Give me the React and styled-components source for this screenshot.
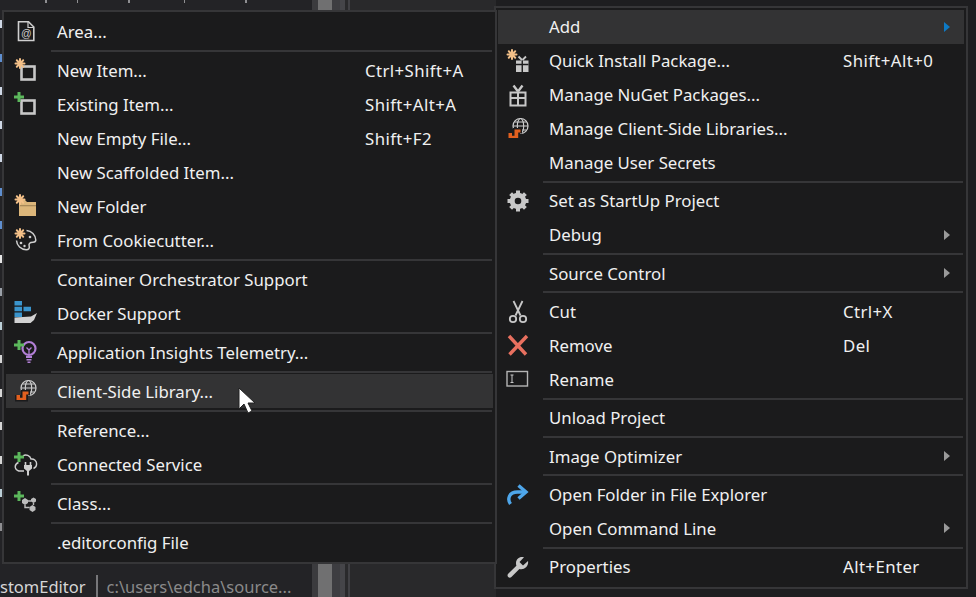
import React from "react";
import styled, { createGlobalStyle } from "styled-components";

const Global = createGlobalStyle`
  html, body { margin: 0; padding: 0; background: #272729; }
  * { box-sizing: border-box; }
`;

const Screen = styled.div`
  position: relative;
  width: 976px;
  height: 597px;
  overflow: hidden;
  background: #272729;
  font-family: "Noto Sans", "Open Sans", sans-serif;
`;

const Backdrop = styled.div`
  height: 100%;
  display: grid;
  grid-template-columns: 312px 38px 146px 1fr;
`;
const EditorPane = styled.div`
  position: relative;
  display: flex;
  flex-direction: column;
  justify-content: space-between;
  background: #232326;
`;
const TopTicks = styled.div`
  height: 3px;
  display: flex;
  padding-left: 45px;
  gap: 30px;
`;
const Tick = styled.i`
  display: block;
  width: 1.5px;
  height: 3px;
  margin-right: ${(p) => p.$gap}px;
  background: #8f8f92;
`;
const CodeEdge = styled.div`
  position: absolute;
  left: 0;
  top: 20px;
  display: flex;
  flex-direction: column;
  gap: 25.5px;
`;
const CodeBit = styled.i`
  display: block;
  width: 2px;
  height: 8px;
  background: ${(p) => p.$c};
`;
const StatusRow = styled.div`
  height: 22px;
  display: flex;
  align-items: center;
  gap: 10px;
  font-size: 16.5px;
  color: #d6d6d6;
  white-space: nowrap;
`;
const StatusPath = styled.span`
  color: #8a8a8a;
  border-left: 2px solid #77777a;
  padding-left: 9px;
`;
const ScrollBar = styled.div`
  background: linear-gradient(90deg, #3b3b3e 0 6px, #707071 6px 20px, #3d3d41 20px 28px, #454549 28px 33px, #2a2a2c 33px 36px, #414145 36px);
`;
const MiddlePane = styled.div`
  background: #29292b;
`;
const RightPane = styled.div`
  background: #1e1e20;
`;

const Menu = styled.div`
  position: absolute;
  left: ${(p) => p.$left}px;
  top: ${(p) => p.$top}px;
  width: ${(p) => p.$width}px;
  z-index: ${(p) => p.$z};
  padding: ${(p) => p.$padTop}px 2px 3px 2px;
  background: #1b1b1c;
  border: 2px solid #363638;
  color: #f0f0f0;
  font-size: 16.8px;
`;
const Row = styled.div`
  height: ${(p) => p.$h}px;
  display: grid;
  grid-template-columns: 51px ${(p) => p.$sc}px 1fr 20px;
  align-items: center;
  white-space: nowrap;
  background: ${(p) => (p.$active ? "#333334" : "transparent")};
`;
const IconCell = styled.span`
  display: flex;
  justify-content: center;
  align-items: center;
  padding-right: 11px;
  height: 26px;
`;
const Label = styled.span``;
const Shortcut = styled.span`
  letter-spacing: 0.42px;
`;
const Arrow = styled.span`
  width: 0;
  height: 0;
  border-top: 5px solid transparent;
  border-bottom: 5px solid transparent;
  border-left: 6px solid ${(p) => (p.$active ? "#0e7ac4" : "#9a9a9a")};
`;
const Sep = styled.div`
  height: ${(p) => p.$h}px;
  margin-left: 45px;
  margin-right: 1px;
  display: flex;
  align-items: center;
  &::before {
    content: "";
    display: block;
    width: 100%;
    height: 2px;
    background: #363638;
  }
`;
const Cursor = styled.svg`
  position: absolute;
  left: 238px;
  top: 387px;
  z-index: 5;
`;

const G = "#cfcfcf";
const Star = () => (
  <g stroke="#f3c088" strokeWidth="2" strokeLinecap="round">
    <path d="M6 1v9M1.5 5.5h9M2.8 2.300l6.400 6.400M9.200 2.300L2.800 8.700" />
  </g>
);
const Plus = () => <path d="M3.500 0h3v3.500H10v3H6.500V10h-3V6.500H0v-3h3.500z" fill="#5cb85c" />;
const Svg = ({ children }) => (
  <svg width="24" height="24" viewBox="0 0 24 24" fill="none">{children}</svg>
);

const icons = {
  area: (
    <Svg>
      <path d="M4.500 2.800h10L19.800 8v13.500H4.500z" stroke={G} strokeWidth="1.600" />
      <path d="M14 3v5.500h5.500" stroke={G} strokeWidth="1.200" />
      <text x="7" y="18" fontSize="10.500" fill={G} fontFamily="Liberation Sans, sans-serif">@</text>
    </Svg>
  ),
  newItem: (
    <Svg>
      <rect x="7.500" y="8.500" width="13" height="13" stroke="#c8c8c8" strokeWidth="2.600" />
      <Star />
    </Svg>
  ),
  existing: (
    <Svg>
      <rect x="7.500" y="8.500" width="13" height="13" stroke="#c8c8c8" strokeWidth="2.600" />
      <Plus />
    </Svg>
  ),
  folder: (
    <Svg>
      <path d="M5 6h6l2 2h9v14H5z" fill="#dcb67a" />
      <rect x="6" y="11" width="16" height="1.300" fill="#a98a5a" />
      <Star />
    </Svg>
  ),
  cookie: (
    <Svg>
      <path d="M12.500 2.600A9.800 9.800 0 0 1 21.800 12c0 1.400-1 2.200-2.800 2.200-3.500 0-4.500 1.800-3.800 4 .5 2-.4 3.500-3 3.500A9.800 9.800 0 0 1 2.500 12.500" stroke={G} strokeWidth="1.500" />
      <circle cx="16" cy="9" r="1.300" fill={G} />
      <circle cx="7" cy="15" r="1.300" fill={G} />
      <circle cx="10.500" cy="18" r="1.200" fill={G} />
      <Star />
    </Svg>
  ),
  docker: (
    <Svg>
      <path d="M.5 0h7.500v4.500H.5zM.5 5.800h7.500v4.500H.5zM9.500 5.800H17v4.500H9.500zM.5 11.500h7.500V16H.5z" fill="#3a94cc" />
      <path d="M9 16l8-.5 6-3.500-3 7-3.500 3H.5v-5.500z" fill="#d2d2d2" />
    </Svg>
  ),
  insights: (
    <Svg>
      <circle cx="15" cy="8.500" r="6.500" stroke="#b27fd6" strokeWidth="2.200" />
      <path d="M12.500 7.500l2.500 2.500 2.500-2.500M15 10v5" stroke="#b27fd6" strokeWidth="1.300" />
      <path d="M12 16h6v2h-6zM12.500 19h5v1.500h-5zM13.500 21.500h3V23h-3z" fill="#b27fd6" />
      <Plus />
    </Svg>
  ),
  lib: (
    <Svg>
      <circle cx="14.500" cy="9" r="7.500" stroke={G} strokeWidth="1.200" />
      <ellipse cx="14.500" cy="9" rx="3.200" ry="7.500" stroke={G} strokeWidth="1.100" />
      <path d="M7 9h15M8.500 5h12M8.500 13h12" stroke={G} strokeWidth="1.100" />
      <path d="M7 11h9v5.500h-2v6H1v-6.500h6z" fill="#1b1b1c" />
      <path d="M8.500 12.500h6v3h-2.300v5.500H2.500v-5H6v2.800h2.500z" fill="#e2601f" />
    </Svg>
  ),
  connected: (
    <Svg>
      <path d="M9 3.800c3-1.800 7-.3 8 3.200 3.200-.3 5.800 1.800 5.600 5 0 2.300-1.300 3.800-3.100 4.500" stroke={G} strokeWidth="1.400" />
      <path d="M4.500 10.500C2 11.500 1 13.500 1.300 15.500c.3 1.800 1.500 3 3.500 3.500H10" stroke={G} strokeWidth="1.400" />
      <path d="M11.500 10v3M16.500 10v3" stroke={G} strokeWidth="1.600" />
      <path d="M10 13h8v3.500l-3 2.500v4.500h-2V19l-3-2.500z" fill={G} />
      <Plus />
    </Svg>
  ),
  classIcon: (
    <Svg>
      <path d="M8 9l3-2 3 2v3l-3 2-3-2zM17 8l2.500-1.500L22 8v2.500L19.500 12 17 10.500zM15.500 16l3-2 3 2v3l-3 2-3-2z" fill="#bdbdbd" />
      <path d="M14 10h3M11 14v2.500h4.500M19.500 12v2" stroke="#bdbdbd" strokeWidth="1.400" />
      <Plus />
    </Svg>
  ),
  quick: (
    <Svg>
      <path d="M10 11.500h12.500V23H10z" fill="#c8c8c8" />
      <path d="M10 15.500h12.500M16.250 11.500V23" stroke="#1b1b1c" strokeWidth="1.400" />
      <path d="M16 11l-3.500-3.500M16.500 11L20 7.500" stroke="#c8c8c8" strokeWidth="1.800" />
      <Star />
    </Svg>
  ),
  nuget: (
    <Svg>
      <path d="M4.500 9.500h15v13h-15z" stroke="#c8c8c8" strokeWidth="2" />
      <path d="M4.500 15h15M12 9.500v13" stroke="#c8c8c8" strokeWidth="2" />
      <path d="M12 8.500L7.500 2.500M12 8.500l4.500-6" stroke="#c8c8c8" strokeWidth="2.400" />
    </Svg>
  ),
  gear: (
    <Svg>
      <circle cx="12" cy="12" r="5.800" stroke="#c8c8c8" strokeWidth="5" />
      <path d="M12 1.500v4M12 18.500v4M1.500 12h4M18.500 12h4M4.600 4.600l2.800 2.800M16.600 16.600l2.800 2.800M19.400 4.600l-2.800 2.800M7.400 16.600l-2.800 2.800" stroke="#c8c8c8" strokeWidth="4" />
    </Svg>
  ),
  cut: (
    <Svg>
      <path d="M7.500 1l7 14.500M16.500 1l-7 14.500" stroke="#c8c8c8" strokeWidth="1.800" />
      <circle cx="7" cy="19" r="3.200" stroke="#c8c8c8" strokeWidth="1.800" />
      <circle cx="17" cy="19" r="3.200" stroke="#c8c8c8" strokeWidth="1.800" />
    </Svg>
  ),
  remove: (
    <Svg>
      <path d="M3 3l17 18.500M21 3L3.500 21.500" stroke="#e8705f" strokeWidth="3.400" />
    </Svg>
  ),
  rename: (
    <Svg>
      <rect x="1" y="4.500" width="20.500" height="14.500" stroke="#b4b4b4" strokeWidth="1.400" />
      <path d="M4.500 8h3M4.500 15.500h3M6 8v7.500" stroke="#c8c8c8" strokeWidth="1" />
    </Svg>
  ),
  open: (
    <Svg>
      <path d="M4.500 21c-3.500-5-1.500-12 7-12h8" stroke="#4ea6ea" strokeWidth="3.400" />
      <path d="M12.500 2.500L20 9l-7.500 6.500" stroke="#4ea6ea" strokeWidth="3.400" />
    </Svg>
  ),
  wrench: (
    <Svg>
      <path
        d="M22 6l-5 4.500-3.500-3.500L18 2.300C14 1 9.800 3.800 10 8.500c0 1 .2 1.600.4 2.300L2.200 18.800c-1 1.200-.8 2.400 0 3.200.9.900 2.200.9 3.200 0l8-8c4.500 1.500 9.600-2.600 8.600-8z"
        fill="#c8c8c8"
      />
    </Svg>
  ),
};

const leftItems = [
  { l: "Area...", i: "area" }, 0,
  { l: "New Item...", i: "newItem", s: "Ctrl+Shift+A" },
  { l: "Existing Item...", i: "existing", s: "Shift+Alt+A" },
  { l: "New Empty File...", s: "Shift+F2" },
  { l: "New Scaffolded Item..." },
  { l: "New Folder", i: "folder" },
  { l: "From Cookiecutter...", i: "cookie" }, 0,
  { l: "Container Orchestrator Support" },
  { l: "Docker Support", i: "docker" }, 0,
  { l: "Application Insights Telemetry...", i: "insights" }, 0,
  { l: "Client-Side Library...", i: "lib", active: true }, 0,
  { l: "Reference..." },
  { l: "Connected Service", i: "connected" }, 0,
  { l: "Class...", i: "classIcon" }, 0,
  { l: ".editorconfig File" },
];

const rightItems = [
  { l: "Add", active: true, sub: true },
  { l: "Quick Install Package...", i: "quick", s: "Shift+Alt+0" },
  { l: "Manage NuGet Packages...", i: "nuget" },
  { l: "Manage Client-Side Libraries...", i: "lib" },
  { l: "Manage User Secrets" }, 0,
  { l: "Set as StartUp Project", i: "gear" },
  { l: "Debug", sub: true }, 0,
  { l: "Source Control", sub: true }, 0,
  { l: "Cut", i: "cut", s: "Ctrl+X" },
  { l: "Remove", i: "remove", s: "Del" },
  { l: "Rename", i: "rename" }, 0,
  { l: "Unload Project" }, 0,
  { l: "Image Optimizer", sub: true }, 0,
  { l: "Open Folder in File Explorer", i: "open" },
  { l: "Open Command Line", sub: true }, 0,
  { l: "Properties", i: "wrench", s: "Alt+Enter" },
];

const MenuList = ({ items, sc, rowH, sepH }) =>
  items.map((it, n) =>
    it === 0 ? (
      <Sep key={n} $h={sepH} />
    ) : (
      <Row key={n} $h={rowH} $sc={sc} $active={it.active}>
        <IconCell>{it.i ? icons[it.i] : null}</IconCell>
        <Label>{it.l}</Label>
        <Shortcut>{it.s}</Shortcut>
        {it.sub ? <Arrow $active={it.active} /> : <span />}
      </Row>
    )
  );

const codeBits = ["#cfd8e6", "#5f8fd0", "#cfd8e6", "#cfd8e6", "#cfd8e6", "#5f8fd0", "#5f8fd0", "#e6e6e6", "#9aa0a8", "#bcd0d8", "#d6d6d6", "#d6d6d6", "#d6d6d6", "#d6d6d6", "#bcd0d8", "#8f8f92"];
const tickGaps = [0, 20, 24, 30, 0];

export default function App() {
  return (
    <Screen>
      <Global />
      <Backdrop>
        <EditorPane>
          <TopTicks>
            {tickGaps.map((g, n) => (
              <Tick key={n} $gap={g} />
            ))}
          </TopTicks>
          <CodeEdge>
            {codeBits.map((c, n) => (
              <CodeBit key={n} $c={c} />
            ))}
          </CodeEdge>
          <StatusRow>
            <span>stomEditor</span>
            <StatusPath>c:\users\edcha\source...</StatusPath>
          </StatusRow>
        </EditorPane>
        <ScrollBar />
        <MiddlePane />
        <RightPane />
      </Backdrop>
      <Menu $left={494} $top={6} $width={474} $z={1} $padTop={2}>
        <MenuList items={rightItems} sc={294} rowH={33.9} sepH={4.5} />
      </Menu>
      <Menu $left={2} $top={10} $width={495} $z={2} $padTop={2}>
        <MenuList items={leftItems} sc={308} rowH={34} sepH={5} />
      </Menu>
      <Cursor width="18" height="28" viewBox="0 0 18 28">
        <path d="M1 1v21l5-5 4 9 4-2-4-8h7z" fill="#fff" stroke="#222" strokeWidth="1" />
      </Cursor>
    </Screen>
  );
}
